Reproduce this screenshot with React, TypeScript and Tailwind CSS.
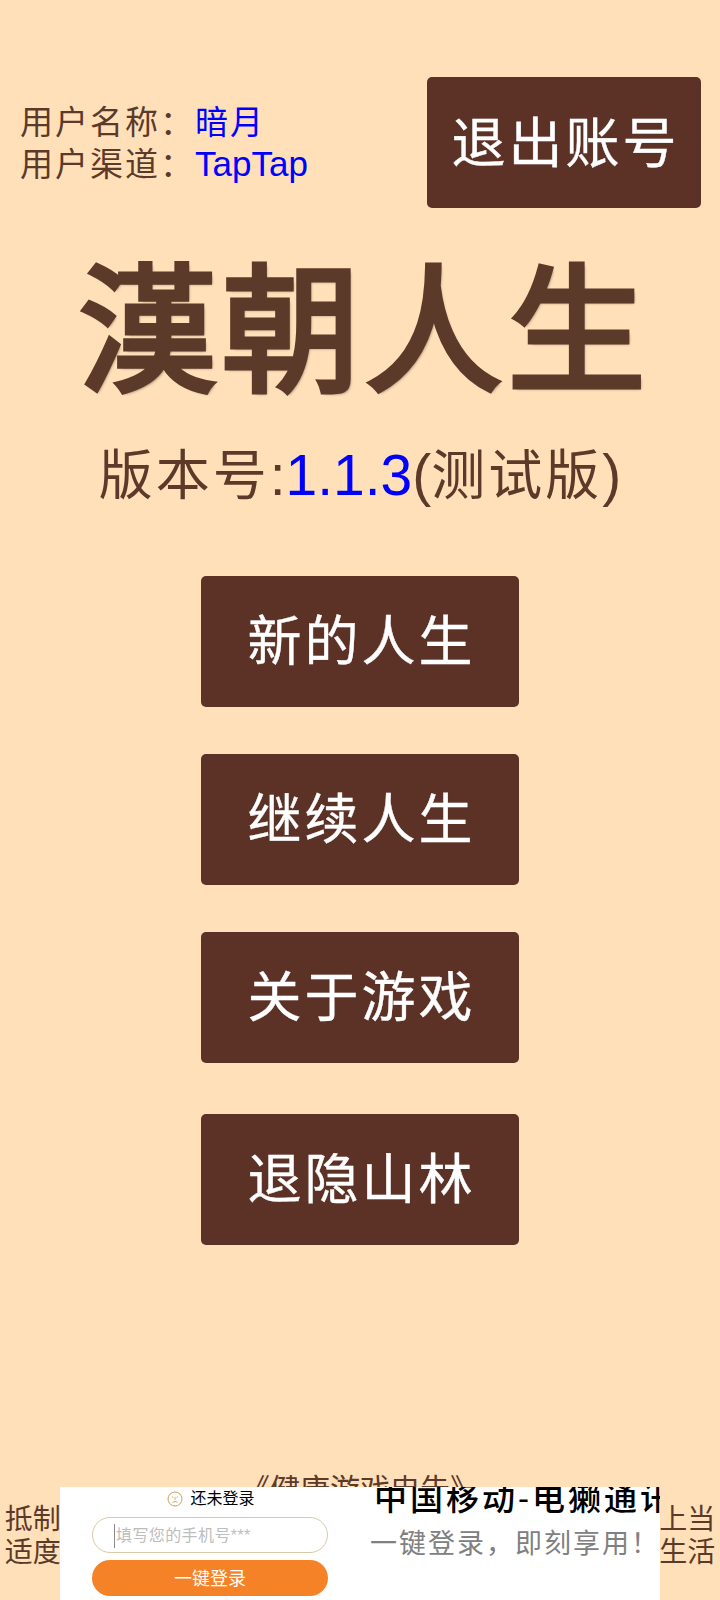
const menu = [
  { label: "新的人生", space: "" },
  { label: "继续人生", space: "mt-[47px]" },
  { label: "关于游戏", space: "mt-[47px]" },
  { label: "退隐山林", space: "mt-[51px]" },
];
const cjk = { fontFamily: '"Liberation Sans", "Noto Sans CJK SC", sans-serif' };

export default function App() {
  return (
    <div style={cjk} className="relative h-[1600px] w-[720px] overflow-hidden bg-[#ffe0b9] text-[#5c3a2a]">
      <header className="flex items-center justify-between pl-[20px] pr-[19px] pt-[77px]">
        <div className="pt-[2px] text-[33px] leading-[41px] tracking-[2px]">
          <p>用户名称：<span className="text-[#0000ff]">暗月</span></p>
          <p>用户渠道：<span className="text-[35px] tracking-normal text-[#0000ff]">TapTap</span></p>
        </div>
        <button className="h-[131px] w-[274px] rounded-[5px] bg-[#5c3126] pl-[3px] pt-[3px] text-[54px] tracking-[3px] text-white [-webkit-text-stroke:0.4px_white]">退出账号</button>
      </header>
      <h1 className="mt-[39px] pl-[9px] text-center text-[138px] font-normal leading-[170px] tracking-[5px] [-webkit-text-stroke:5px_#5c3a2a] [text-shadow:2px_2px_3px_rgba(0,0,0,0.5)]">漢朝人生</h1>
      <p className="mt-[25px] text-center text-[57px] leading-[66px]">
        <span className="text-[54px] tracking-[3px]">版本号</span>:<span className="text-[#0000ff]">1.1.3</span>(<span className="text-[54px] tracking-[3px]">测试版</span>)
      </p>
      <nav className="mt-[67px] flex flex-col items-center">
        {menu.map((m) => (
          <button key={m.label} className={`h-[131px] w-[318px] rounded-[5px] bg-[#5c3126] pl-[3px] pt-[2px] text-[54px] tracking-[3px] text-white [-webkit-text-stroke:0.4px_white] ${m.space}`}>{m.label}</button>
        ))}
      </nav>
      <footer className="absolute bottom-[31px] left-0 w-full text-[28px] leading-[33px]">
        <p className="-mb-[3px] text-center text-[30px]">《健康游戏忠告》</p>
        <p className="text-center whitespace-nowrap [word-spacing:5px]">抵制不良游戏 拒绝盗版游戏 注意自我保护 谨防受骗上当</p>
        <p className="text-center whitespace-nowrap [word-spacing:5px]">适度游戏益脑 沉迷游戏伤身 合理安排时间 享受健康生活</p>
      </footer>
      <aside className="absolute bottom-0 left-[60px] flex h-[113px] w-[600px] overflow-hidden bg-white">
        <div className="flex w-[300px] flex-col items-center">
          <div className="flex items-center gap-[7px] pl-[2px] text-[16px] leading-[24px] text-black">
            <svg width="16" height="16" viewBox="0 0 16 16" fill="none" stroke="#c9a063">
              <circle cx="8" cy="8" r="7" />
              <path d="M5 5.5l1.5 1M11 5.5l-1.5 1M8 6v3" strokeWidth="0.8" />
              <path d="M5.5 11.5c1.5-1.2 3.5-1.2 5 0" />
            </svg>
            还未登录
          </div>
          <div className="mt-[6px] flex h-[36px] w-[236px] items-center rounded-full border border-[#d8c9a8] pl-[21px] pt-[1px] text-[16px] tracking-[0.4px] text-[#bdbdbd]">
            <span className="mr-[1px] h-[24px] w-px bg-[#888]" />填写您的手机号***
          </div>
          <button className="mt-[7px] h-[36px] w-[236px] rounded-full bg-[#f58226] pt-[2px] text-[18px] text-white">一键登录</button>
        </div>
        <div className="w-[300px]">
          <p className="-mt-[6px] whitespace-nowrap pl-[14px] text-[33px] font-medium leading-[36px] tracking-[3px] text-black">中国移动-电獭通讯</p>
          <p className="mt-[10px] whitespace-nowrap pl-[10px] text-[27px] leading-[34px] tracking-[2px] text-[#808080]">一键登录，即刻享用！</p>
        </div>
      </aside>
    </div>
  );
}
